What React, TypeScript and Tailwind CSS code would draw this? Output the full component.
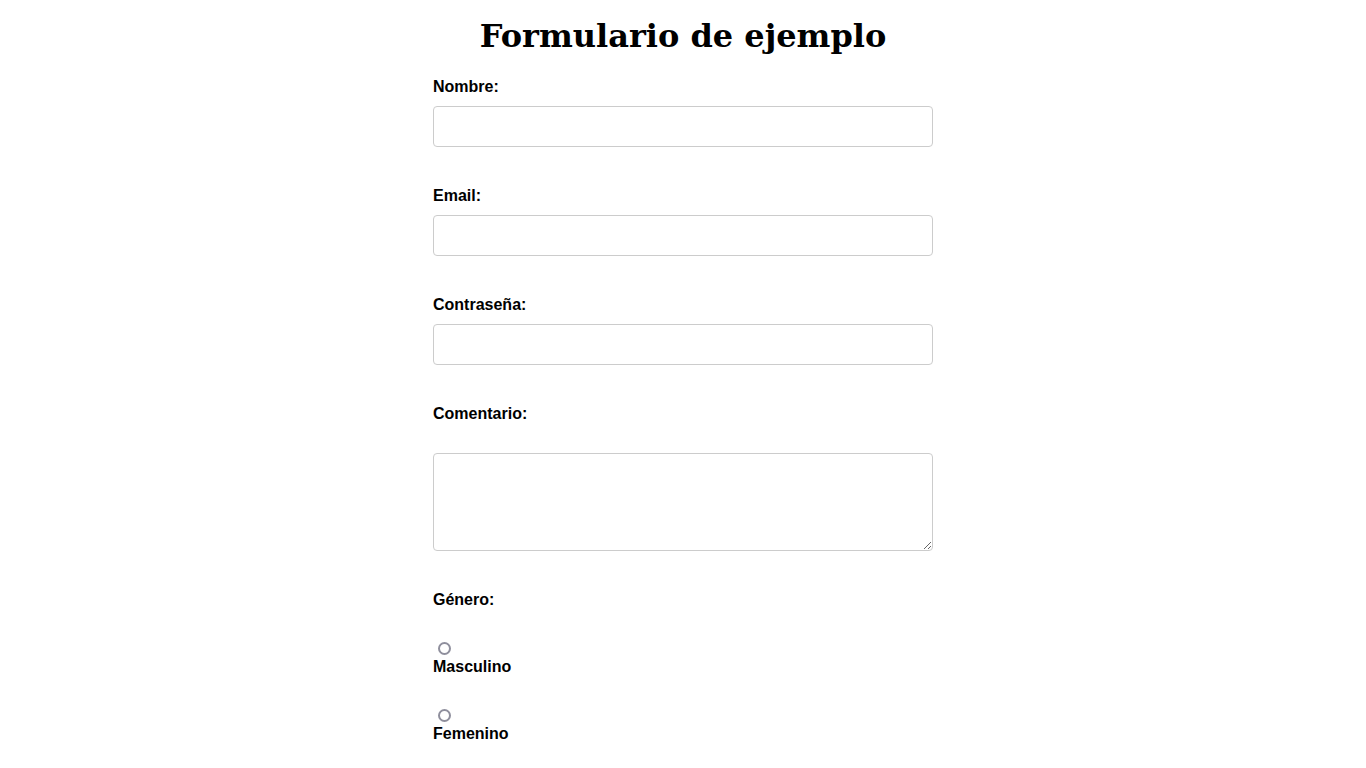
import type { FC } from 'react';

const labelCls = 'block pt-[1px] text-[16px] leading-[18px] font-bold text-black';
const inputCls =
  'block w-full h-[41px] px-[10px] border border-[#cccccc] rounded-[4px] bg-white text-[16px] outline-none';
const radioCls =
  'block appearance-none ml-[5px] w-[13px] h-[13px] rounded-full border-2 border-[#8f8f9d] bg-white';

interface FieldProps {
  label: string;
  type: string;
}

const Field: FC<FieldProps> = ({ label, type }) => (
  <div className="mb-[39px]">
    <label className={`${labelCls} mb-[10px]`}>{label}</label>
    <input type={type} className={inputCls} />
  </div>
);

const App: FC = () => (
  <div className="min-h-screen bg-white font-['Liberation_Sans',Arial,sans-serif]">
    <div className="w-[500px] mx-auto">
      <h1 className="pt-[18px] text-center text-[32px] leading-[37px] font-bold text-black font-['DejaVu_Serif',serif]">
        Formulario de ejemplo
      </h1>
      <form className="mt-[22px]">
        <Field label="Nombre:" type="text" />
        <Field label="Email:" type="email" />
        <Field label="Contraseña:" type="password" />
        <div className="mb-[39px]">
          <label className={`${labelCls} mb-[30px]`}>Comentario:</label>
          <textarea className="block w-full h-[98px] p-[10px] border border-[#cccccc] rounded-[4px] bg-white text-[16px] outline-none" />
        </div>
        <label className={labelCls}>Género:</label>
        <input type="radio" name="genero" className={`${radioCls} mt-[33px]`} />
        <label className={`${labelCls} mt-[2px]`}>Masculino</label>
        <input type="radio" name="genero" className={`${radioCls} mt-[33px]`} />
        <label className={`${labelCls} mt-[2px]`}>Femenino</label>
      </form>
    </div>
  </div>
);

export default App;
